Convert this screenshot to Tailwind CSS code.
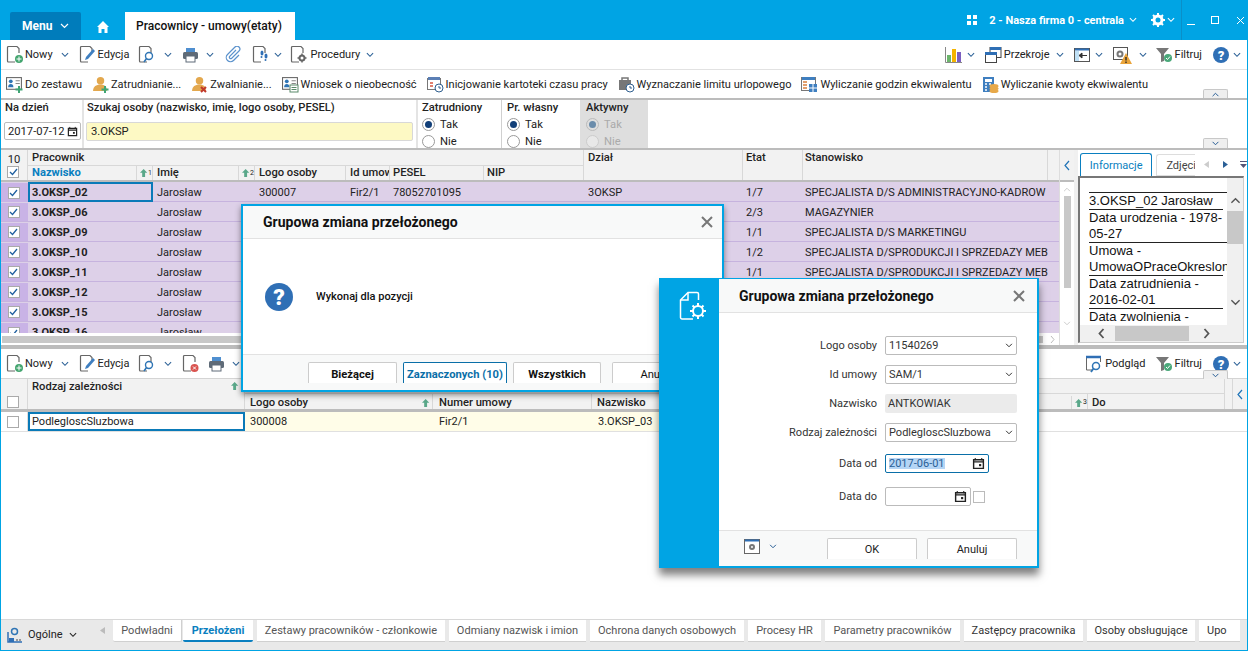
<!DOCTYPE html>
<html lang="pl">
<head>
    <meta charset="UTF-8">
    <title>Pracownicy - umowy(etaty)</title>
    <script src="https://cdn.jsdelivr.net/npm/@tailwindcss/browser@4"></script>
</head>
<body class="w-[1248px] h-[651px] overflow-hidden relative bg-white text-[#222] text-[11px] leading-none font-[family-name:Roboto,sans-serif]">
    <!-- shared icons -->
    <svg class="hidden">
        <symbol id="chev" viewBox="0 0 9 6"><path d="M1 1l3.500 3.500L8 1" fill="none" stroke="currentColor" stroke-width="1.200"/></symbol>
        <symbol id="doc" viewBox="0 0 18 19"><path d="M9 17H2.500a1 1 0 0 1-1-1V2.500a1 1 0 0 1 1-1H11l2 2V8" fill="none" stroke="#666" stroke-width="1.200"/></symbol>
        <symbol id="cal" viewBox="0 0 12 12"><path d="M1.500 2.500h9v8h-9zM1.500 4.500h9" fill="none" stroke="#222" stroke-width="1.300"/><path d="M3 1v2M9 1v2" stroke="#222"/><rect x="6.500" y="6.500" width="2" height="2" fill="#222"/></symbol>
        <symbol id="sort" viewBox="0 0 11 11"><path d="M5 0L0 5h3v6h4V5h3z" fill="#5aa88a"/></symbol>
        <symbol id="help" viewBox="0 0 16 16"><circle cx="8" cy="8" r="8" fill="#2f6fb5"/><text x="8" y="12.500" text-anchor="middle" font-family="Roboto" font-weight="900" font-size="13" fill="#fff">?</text></symbol>
        <symbol id="print" viewBox="0 0 17 16"><rect x="4" y="1" width="9" height="5" fill="#4f8fd0"/><rect x="1" y="5" width="15" height="7" rx="1.500" fill="#5f6b78"/><rect x="4" y="9" width="9" height="6" fill="#fff" stroke="#5f6b78"/></symbol>
        <symbol id="filter" viewBox="0 0 17 16"><path d="M0 1h13L8 7v7l-3 1V7z" fill="#777"/><circle cx="12" cy="11" r="4" fill="#4aa87a"/><path d="M10 11l1.500 1.500L14 9.500" fill="none" stroke="#fff"/></symbol>
        <symbol id="newdoc" viewBox="0 0 18 19"><use href="#doc"/><circle cx="13" cy="14" r="4" fill="#43a56f"/><path d="M13 11.500v5M10.500 14h5" stroke="#fff"/></symbol>
        <symbol id="edit" viewBox="0 0 18 19"><use href="#doc"/><path d="M6 15l1-3 7-8 2 2-7 8z" fill="#3f7fc0"/></symbol>
        <symbol id="find" viewBox="0 0 18 19"><use href="#doc"/><circle cx="11" cy="11" r="3.500" fill="#fff" stroke="#2f75b5" stroke-width="1.400"/><path d="M8.500 13.500L6 17" stroke="#2f75b5" stroke-width="1.600"/></symbol>
        <symbol id="person" viewBox="0 0 16 16"><circle cx="8" cy="4.500" r="3.500" fill="#e3a84e"/><path d="M1 14c0-4 3-6 7-6s6 2 6 6z" fill="#e3a84e"/></symbol>
        <symbol id="card" viewBox="0 0 16 16"><rect x=".5" y="1.500" width="14" height="11" fill="#fff" stroke="#666"/><circle cx="4.500" cy="5" r="1.800" fill="#2f75b5"/><path d="M2 10.500c0-2 1-3 2.500-3s2.500 1 2.500 3z" fill="#2f75b5"/><path d="M9 4.500h4M9 7h4" stroke="#888"/></symbol>
    </svg>

    <div class="h-full flex flex-col border-x border-b border-[#00a4e4]">
        <!-- title bar -->
        <div class="h-[40px] -mx-px bg-[#00a4e4] flex items-end shrink-0 text-white">
            <div class="ml-[10px] w-[71px] h-[28px] bg-[#007cbb] rounded-t-[2px] flex items-center pl-[12px] font-bold text-[12px]">Menu<svg class="w-[9px] h-[6px] ml-[8px]"><use href="#chev"/></svg></div>
            <svg class="ml-[16px] mb-[7px] w-[12px] h-[12px]" viewBox="0 0 12 12"><path d="M6 0L0 6h1.500v6h3V8h3v4h3V6H12z" fill="#fff"/></svg>
            <div class="ml-[16px] w-[170px] h-[28px] bg-white text-[#111] flex items-center pl-[11px] font-medium text-[12px]">Pracownicy - umowy(etaty)</div>
            <div class="ml-auto h-[40px] flex items-center font-bold">
                <div class="grid grid-cols-2 gap-[2px] w-[10px]"><i class="h-[4px] bg-white"></i><i class="h-[4px] bg-white"></i><i class="h-[4px] bg-white"></i><i class="h-[4px] bg-white"></i></div>
                <span class="ml-[12px]">2 - Nasza firma 0 - centrala</span>
                <svg class="w-[8px] h-[6px] ml-[5px]"><use href="#chev"/></svg>
                <svg class="ml-[14px] w-[14px] h-[14px]" viewBox="0 0 14 14"><circle cx="7" cy="7" r="4" fill="none" stroke="#fff" stroke-width="3"/><path d="M7 0v3M7 11v3M0 7h3M11 7h3M2 2l2 2M10 10l2 2M2 12l2-2M10 4l2-2" stroke="#fff" stroke-width="2"/></svg>
                <svg class="w-[8px] h-[6px] ml-[2px]"><use href="#chev"/></svg>
                <div class="ml-[6px] h-[40px] border-l border-[#0a8fc8] flex items-center pl-[5px] pr-[3px]">
                    <i class="block w-[8px] h-[1px] bg-white mt-[8px]"></i>
                    <i class="block ml-[16px] w-[8px] h-[8px] border border-white"></i>
                    <svg class="ml-[17px] w-[9px] h-[9px]" viewBox="0 0 9 9"><path d="M1 1l7 7M8 1L1 8" stroke="#fff"/></svg>
                </div>
            </div>
        </div>

        <!-- main toolbar -->
        <div class="h-[30px] shrink-0 border-b border-[#e2e2e2] flex items-center">
            <svg class="ml-[5px] w-[18px] h-[19px]"><use href="#newdoc"/></svg><span class="ml-[1px]">Nowy</span>
            <svg class="ml-[8px] w-[8px] h-[6px] text-[#2a5f96]"><use href="#chev"/></svg>
            <svg class="ml-[10px] w-[18px] h-[19px]"><use href="#edit"/></svg><span class="ml-[1px]">Edycja</span>
            <svg class="ml-[9px] w-[18px] h-[19px]"><use href="#find"/></svg>
            <svg class="ml-[8px] w-[8px] h-[6px] text-[#2a5f96]"><use href="#chev"/></svg>
            <svg class="ml-[10px] w-[17px] h-[16px]"><use href="#print"/></svg>
            <svg class="ml-[7px] w-[8px] h-[6px] text-[#2a5f96]"><use href="#chev"/></svg>
            <svg class="ml-[11px] w-[17px] h-[17px]" viewBox="0 0 17 17"><path d="M11 4l-6.500 6.500a1.500 1.500 0 0 0 2 2L14 5a2.800 2.800 0 0 0-4-4L2.500 8.500a4.200 4.200 0 0 0 6 6L14 9" fill="none" stroke="#5b92cc" stroke-width="1.200"/></svg>
            <svg class="ml-[10px] w-[18px] h-[19px]" viewBox="0 0 18 19"><use href="#doc"/><ellipse cx="10" cy="8" rx="1.500" ry="2.500" fill="#2f6fb5"/><ellipse cx="14" cy="11" rx="1.500" ry="2.500" fill="#2f6fb5"/><circle cx="9.500" cy="12" r="1" fill="#2f6fb5"/><circle cx="13.500" cy="15" r="1" fill="#2f6fb5"/></svg>
            <svg class="ml-[4px] w-[8px] h-[6px] text-[#2a5f96]"><use href="#chev"/></svg>
            <svg class="ml-[8px] w-[18px] h-[19px]" viewBox="0 0 18 19"><use href="#doc"/><circle cx="12" cy="13" r="2.500" fill="none" stroke="#666" stroke-width="2"/><path d="M12 8.500v2M12 15.500v2M7.500 13h2M14.500 13h2" stroke="#666" stroke-width="1.500"/></svg>
            <span class="ml-[2px]">Procedury</span>
            <svg class="ml-[6px] w-[8px] h-[6px] text-[#2a5f96]"><use href="#chev"/></svg>

            <div class="ml-auto flex items-center pr-[6px]">
                <svg class="w-[17px] h-[16px]" viewBox="0 0 17 16"><path d="M.5 0v15.500H17" fill="none" stroke="#888"/><rect x="2" y="8" width="4" height="7" fill="#6cb56c"/><rect x="7" y="2" width="4" height="13" fill="#f5b400"/><rect x="12" y="5" width="4" height="10" fill="#7b5fc0"/></svg>
                <svg class="ml-[5px] w-[8px] h-[6px] text-[#2a5f96]"><use href="#chev"/></svg>
                <svg class="ml-[10px] w-[17px] h-[16px]" viewBox="0 0 17 16"><rect x="5" y=".5" width="11" height="10" fill="#fff" stroke="#444"/><rect x="5" y="0" width="11" height="3" fill="#2f6fb5"/><rect x=".5" y="5.500" width="11" height="10" fill="#fff" stroke="#444"/><rect x="0" y="5" width="12" height="3" fill="#2f6fb5"/></svg>
                <span class="ml-[2px]">Przekroje</span>
                <svg class="ml-[6px] w-[8px] h-[6px] text-[#2a5f96]"><use href="#chev"/></svg>
                <svg class="ml-[10px] w-[16px] h-[14px]" viewBox="0 0 16 14"><rect x=".5" y=".5" width="15" height="13" fill="#fff" stroke="#555"/><rect x="1" y="3" width="4" height="10" fill="#bfe0f5"/><path d="M5 7.500h8M5 7.500l3-2.500v5z" stroke="#333" fill="#333"/><path d="M1 1.500h14" stroke="#2f6fb5" stroke-width="2"/></svg>
                <svg class="ml-[5px] w-[8px] h-[6px] text-[#2a5f96]"><use href="#chev"/></svg>
                <svg class="ml-[10px] w-[20px] h-[18px]" viewBox="0 0 20 18"><rect x=".5" y="1.500" width="14" height="12" fill="#fff" stroke="#555"/><circle cx="7" cy="8" r="2.500" fill="none" stroke="#777" stroke-width="2"/><path d="M13 7l6 11H7z" fill="#eaa43a"/><path d="M13 11v3.500M13 15.500v1.500" stroke="#222" stroke-width="1.300"/></svg>
                <svg class="ml-[6px] w-[8px] h-[6px] text-[#2a5f96]"><use href="#chev"/></svg>
                <svg class="ml-[9px] w-[17px] h-[16px]"><use href="#filter"/></svg>
                <span class="ml-[2px]">Filtruj</span>
                <svg class="ml-[11px] w-[16px] h-[16px]"><use href="#help"/></svg>
                <svg class="ml-[4px] w-[8px] h-[6px] text-[#2a5f96]"><use href="#chev"/></svg>
            </div>
        </div>

        <!-- actions toolbar -->
        <div class="h-[28px] shrink-0 flex items-center relative">
            <svg class="ml-[5px] w-[17px] h-[17px]" viewBox="0 0 17 17"><use href="#card"/><path d="M13 10v7M9.500 13.500h7" stroke="#3fa574" stroke-width="2"/></svg><span class="ml-[2px]">Do zestawu</span>
            <svg class="ml-[10px] w-[17px] h-[17px]" viewBox="0 0 17 17"><use href="#person"/><path d="M13 10v7M9.500 13.500h7" stroke="#3fa574" stroke-width="2"/></svg><span class="ml-[2px]">Zatrudnianie...</span>
            <svg class="ml-[10px] w-[17px] h-[17px]" viewBox="0 0 17 17"><use href="#person"/><path d="M10 11l5 5M15 11l-5 5" stroke="#c0392b" stroke-width="2"/></svg><span class="ml-[2px]">Zwalnianie...</span>
            <svg class="ml-[10px] w-[17px] h-[17px]" viewBox="0 0 17 17"><use href="#card"/><rect x="8" y="9" width="8" height="7" fill="#fff" stroke="#5a8a6a"/><path d="M9.500 11.500h5M9.500 13.500h5" stroke="#5a8a6a"/></svg><span class="ml-[2px]">Wniosek o nieobecność</span>
            <svg class="ml-[10px] w-[17px] h-[17px]" viewBox="0 0 17 17"><rect x=".5" y="2.500" width="13" height="11" fill="#fff" stroke="#777"/><rect x="1" y="1" width="12" height="3" fill="#5b7fb5"/><path d="M3 7h3M3 10h3" stroke="#d9573f" stroke-width="1.500"/><circle cx="12" cy="12" r="4" fill="#fff" stroke="#2f5f8f"/><path d="M12 10v2h2" fill="none" stroke="#2f5f8f"/></svg><span class="ml-[2px]">Inicjowanie kartoteki czasu pracy</span>
            <svg class="ml-[10px] w-[17px] h-[17px]" viewBox="0 0 17 17"><rect x="1" y="4" width="12" height="10" fill="#777"/><path d="M4 4V2h6v2" fill="none" stroke="#777" stroke-width="1.500"/><circle cx="12" cy="12" r="4" fill="#fff" stroke="#2f5f8f"/><path d="M12 10v2h2" fill="none" stroke="#2f5f8f"/></svg><span class="ml-[2px]">Wyznaczanie limitu urlopowego</span>
            <svg class="ml-[10px] w-[17px] h-[17px]" viewBox="0 0 17 17"><rect x=".5" y="1.500" width="14" height="13" fill="#fff" stroke="#777"/><rect x="1" y="1" width="13" height="3" fill="#3f7fc0"/><path d="M2 6h4M2 9h4M2 12h4" stroke="#d9803f" stroke-width="1.500"/><rect x="8" y="8" width="8" height="8" fill="#3f7fc0"/><path d="M12 8v8M8 12h8" stroke="#fff"/></svg><span class="ml-[2px]">Wyliczanie godzin ekwiwalentu</span>
            <svg class="ml-[10px] w-[17px] h-[17px]" viewBox="0 0 17 17"><rect x="1" y="1" width="11" height="15" fill="#3f7fc0"/><rect x="3" y="3" width="7" height="3" fill="#fff"/><path d="M3 8h2M7 8h2M3 11h2M3 14h2" stroke="#fff" stroke-width="1.500"/><ellipse cx="12" cy="10" rx="4.500" ry="2" fill="#e7a94a"/><ellipse cx="12" cy="12.500" rx="4.500" ry="2" fill="#e7a94a"/><ellipse cx="12" cy="15" rx="4.500" ry="2" fill="#e7a94a"/></svg><span class="ml-[2px]">Wyliczanie kwoty ekwiwalentu</span>
            <div class="absolute left-[1202px] top-[19px] w-[25px] h-[9px] bg-[#efefef] border border-b-0 border-[#c8c8c8] rounded-t-[2px] flex justify-center items-center"><svg class="w-[9px] h-[5px] text-[#2a5f96] rotate-180"><use href="#chev"/></svg></div>
        </div>

        <!-- filter row -->
        <div class="h-[52px] shrink-0 border-y-[2px] border-[#bcbcbc] flex font-medium relative text-[11.200px]">
            <div class="w-[83px] pl-[4px] pt-[2px] border-r-[2px] border-[#e4e4e4]">
                <div>Na dzień</div>
                <div class="mt-[9px] w-[77px] h-[18px] -ml-px border border-[#bbb] rounded-[2px] flex items-center pl-[3px] font-normal">2017-07-12<svg class="ml-auto mr-[2px] w-[11px] h-[11px]"><use href="#cal"/></svg></div>
            </div>
            <div class="w-[334px] pl-[3px] pt-[2px] border-r-[2px] border-[#e4e4e4]">
                <div>Szukaj osoby (nazwisko, imię, logo osoby, PESEL)</div>
                <div class="mt-[9px] w-[327px] h-[19px] -ml-[1px] bg-[#fdf9c4] border border-[#d8d8d8] rounded-[2px] flex items-center pl-[4px] font-normal">3.OKSP</div>
            </div>
            <div class="w-[84px] pl-[4px] pt-[2px] border-r-[1px] border-[#d0d0d0]">
                <div>Zatrudniony</div>
                <div class="mt-[5px] flex items-center font-normal"><span class="w-[13px] h-[13px] rounded-full border border-[#999] flex items-center justify-center"><i class="block w-[7px] h-[7px] rounded-full bg-[#123f78]"></i></span><span class="ml-[5px]">Tak</span></div>
                <div class="mt-[4px] flex items-center font-normal"><span class="w-[13px] h-[13px] rounded-full border border-[#999]"></span><span class="ml-[5px]">Nie</span></div>
            </div>
            <div class="w-[78px] pl-[5px] pt-[2px]">
                <div>Pr. własny</div>
                <div class="mt-[5px] flex items-center font-normal"><span class="w-[13px] h-[13px] rounded-full border border-[#999] flex items-center justify-center"><i class="block w-[7px] h-[7px] rounded-full bg-[#123f78]"></i></span><span class="ml-[5px]">Tak</span></div>
                <div class="mt-[4px] flex items-center font-normal"><span class="w-[13px] h-[13px] rounded-full border border-[#999]"></span><span class="ml-[5px]">Nie</span></div>
            </div>
            <div class="w-[68px] pl-[6px] pt-[2px] bg-[#dedede]">
                <div>Aktywny</div>
                <div class="mt-[5px] flex items-center font-normal text-[#aaa]"><span class="w-[13px] h-[13px] rounded-full border border-[#bbb] flex items-center justify-center"><i class="block w-[7px] h-[7px] rounded-full bg-[#6a8cab]"></i></span><span class="ml-[5px]">Tak</span></div>
                <div class="mt-[4px] flex items-center font-normal text-[#aaa]"><span class="w-[13px] h-[13px] rounded-full border border-[#ccc] bg-[#e8e8e8]"></span><span class="ml-[5px]">Nie</span></div>
            </div>
            <div class="absolute left-[1202px] top-[38px] w-[25px] h-[10px] bg-[#efefef] border border-b-0 border-[#c8c8c8] rounded-t-[2px] flex justify-center items-center"><svg class="w-[9px] h-[5px] text-[#2a5f96]"><use href="#chev"/></svg></div>
        </div>

        <!-- upper grid + info panel -->
        <div class="h-[195px] shrink-0 flex">
            <div class="w-[1058px] flex flex-col">
                <div class="h-[32px] shrink-0 bg-[#f2f2f2] border-b-[2px] border-[#bcbcbc] grid grid-cols-[27px_125px_102px_91px_44px_94px_100px_159px_60px_245px_11px] grid-rows-[16px_14px] font-medium text-[11.200px]">
                    <div class="border-r border-[#d8d8d8] flex items-center justify-center font-normal pt-[3px]">10</div>
                    <div class="col-span-6 border-r border-[#d8d8d8] border-b pl-[4px] pt-[2px]">Pracownik</div>
                    <div class="row-span-2 border-r border-[#d8d8d8] pl-[4px] pt-[2px]">Dział</div>
                    <div class="row-span-2 border-r border-[#d8d8d8] pl-[3px] pt-[2px]">Etat</div>
                    <div class="row-span-2 border-r border-[#d8d8d8] pl-[2px] pt-[2px]">Stanowisko</div>
                    <div class="row-span-2"></div>
                    <div class="border-r border-[#d8d8d8] flex justify-center pr-[2px]"><span class="w-[12px] h-[12px] border border-[#aaa] bg-white flex items-center justify-center text-[#1f5f9f]"><svg class="w-[9px] h-[8px]" viewBox="0 0 9 8"><path d="M1 4l2.500 2.500L8 1" fill="none" stroke="currentColor" stroke-width="1.300"/></svg></span></div>
                    <div class="border-r border-[#d8d8d8] pl-[4px] text-[#0a7fc0] font-bold flex items-center">Nazwisko<span class="ml-auto w-[16px] h-full border-l border-[#d8d8d8] flex items-center pl-[3px] text-[#333] font-normal text-[7px]"><svg class="w-[8px] h-[10px]"><use href="#sort"/></svg>1</span></div>
                    <div class="border-r border-[#d8d8d8] pl-[4px] flex items-center">Imię<span class="ml-auto w-[16px] h-full border-l border-[#d8d8d8] flex items-center pl-[3px] font-normal text-[7px]"><svg class="w-[8px] h-[10px]"><use href="#sort"/></svg>2</span></div>
                    <div class="border-r border-[#d8d8d8] pl-[4px] flex items-center">Logo osoby</div>
                    <div class="border-r border-[#d8d8d8] pl-[4px] flex items-center overflow-hidden whitespace-nowrap">Id umow</div>
                    <div class="border-r border-[#d8d8d8] pl-[3px] flex items-center">PESEL</div>
                    <div class="border-r border-[#d8d8d8] pl-[3px] flex items-center">NIP</div>
                </div>
                <div class="h-[151px] overflow-hidden bg-[#ddd0e8]">
                    <div class="h-[20px] pt-px border-b border-[#c6b3de] grid grid-cols-[27px_125px_102px_91px_44px_94px_100px_159px_60px_245px] items-center">
                        <div class="h-full bg-[#c9b3e6] flex items-center justify-center pr-[2px]"><span class="w-[12px] h-[12px] border border-[#aaa] bg-white flex items-center justify-center text-[#1f5f9f]"><svg class="w-[9px] h-[8px]" viewBox="0 0 9 8"><path d="M1 4l2.500 2.500L8 1" fill="none" stroke="currentColor" stroke-width="1.300"/></svg></span></div>
                        <div class="h-[20px] -mt-px border-2 border-[#0a7ab8] flex items-center pl-[2px] pt-px font-bold">3.OKSP_02</div>
                        <div class="pl-[4px]">Jarosław</div><div class="pl-[4px]">300007</div><div class="pl-[4px]">Fir2/1</div><div class="pl-[3px]">78052701095</div><div></div><div class="pl-[4px]">3OKSP</div><div class="pl-[3px]">1/7</div><div class="pl-[2px] whitespace-nowrap">SPECJALISTA D/S ADMINISTRACYJNO-KADROW</div>
                    </div>
                    <div class="h-[20px] pt-px border-b border-[#c6b3de] grid grid-cols-[27px_125px_102px_91px_44px_94px_100px_159px_60px_245px] items-center">
                        <div class="h-full bg-[#c9b3e6] flex items-center justify-center pr-[2px]"><span class="w-[12px] h-[12px] border border-[#aaa] bg-white flex items-center justify-center text-[#1f5f9f]"><svg class="w-[9px] h-[8px]" viewBox="0 0 9 8"><path d="M1 4l2.500 2.500L8 1" fill="none" stroke="currentColor" stroke-width="1.300"/></svg></span></div>
                        <div class="pl-[4px] font-bold">3.OKSP_06</div>
                        <div class="pl-[4px]">Jarosław</div><div></div><div></div><div></div><div></div><div></div><div class="pl-[3px]">2/3</div><div class="pl-[2px]">MAGAZYNIER</div>
                    </div>
                    <div class="h-[20px] pt-px border-b border-[#c6b3de] grid grid-cols-[27px_125px_102px_91px_44px_94px_100px_159px_60px_245px] items-center">
                        <div class="h-full bg-[#c9b3e6] flex items-center justify-center pr-[2px]"><span class="w-[12px] h-[12px] border border-[#aaa] bg-white flex items-center justify-center text-[#1f5f9f]"><svg class="w-[9px] h-[8px]" viewBox="0 0 9 8"><path d="M1 4l2.500 2.500L8 1" fill="none" stroke="currentColor" stroke-width="1.300"/></svg></span></div>
                        <div class="pl-[4px] font-bold">3.OKSP_09</div>
                        <div class="pl-[4px]">Jarosław</div><div></div><div></div><div></div><div></div><div></div><div class="pl-[3px]">1/1</div><div class="pl-[2px]">SPECJALISTA D/S MARKETINGU</div>
                    </div>
                    <div class="h-[20px] pt-px border-b border-[#c6b3de] grid grid-cols-[27px_125px_102px_91px_44px_94px_100px_159px_60px_245px] items-center">
                        <div class="h-full bg-[#c9b3e6] flex items-center justify-center pr-[2px]"><span class="w-[12px] h-[12px] border border-[#aaa] bg-white flex items-center justify-center text-[#1f5f9f]"><svg class="w-[9px] h-[8px]" viewBox="0 0 9 8"><path d="M1 4l2.500 2.500L8 1" fill="none" stroke="currentColor" stroke-width="1.300"/></svg></span></div>
                        <div class="pl-[4px] font-bold">3.OKSP_10</div>
                        <div class="pl-[4px]">Jarosław</div><div></div><div></div><div></div><div></div><div></div><div class="pl-[3px]">1/2</div><div class="pl-[2px] whitespace-nowrap overflow-hidden">SPECJALISTA D/SPRODUKCJI I SPRZEDAŻY MEB</div>
                    </div>
                    <div class="h-[20px] pt-px border-b border-[#c6b3de] grid grid-cols-[27px_125px_102px_91px_44px_94px_100px_159px_60px_245px] items-center">
                        <div class="h-full bg-[#c9b3e6] flex items-center justify-center pr-[2px]"><span class="w-[12px] h-[12px] border border-[#aaa] bg-white flex items-center justify-center text-[#1f5f9f]"><svg class="w-[9px] h-[8px]" viewBox="0 0 9 8"><path d="M1 4l2.500 2.500L8 1" fill="none" stroke="currentColor" stroke-width="1.300"/></svg></span></div>
                        <div class="pl-[4px] font-bold">3.OKSP_11</div>
                        <div class="pl-[4px]">Jarosław</div><div></div><div></div><div></div><div></div><div></div><div class="pl-[3px]">1/1</div><div class="pl-[2px] whitespace-nowrap overflow-hidden">SPECJALISTA D/SPRODUKCJI I SPRZEDAŻY MEB</div>
                    </div>
                    <div class="h-[20px] pt-px border-b border-[#c6b3de] grid grid-cols-[27px_125px_102px_91px_44px_94px_100px_159px_60px_245px] items-center">
                        <div class="h-full bg-[#c9b3e6] flex items-center justify-center pr-[2px]"><span class="w-[12px] h-[12px] border border-[#aaa] bg-white flex items-center justify-center text-[#1f5f9f]"><svg class="w-[9px] h-[8px]" viewBox="0 0 9 8"><path d="M1 4l2.500 2.500L8 1" fill="none" stroke="currentColor" stroke-width="1.300"/></svg></span></div>
                        <div class="pl-[4px] font-bold">3.OKSP_12</div>
                        <div class="pl-[4px]">Jarosław</div>
                    </div>
                    <div class="h-[20px] pt-px border-b border-[#c6b3de] grid grid-cols-[27px_125px_102px_91px_44px_94px_100px_159px_60px_245px] items-center">
                        <div class="h-full bg-[#c9b3e6] flex items-center justify-center pr-[2px]"><span class="w-[12px] h-[12px] border border-[#aaa] bg-white flex items-center justify-center text-[#1f5f9f]"><svg class="w-[9px] h-[8px]" viewBox="0 0 9 8"><path d="M1 4l2.500 2.500L8 1" fill="none" stroke="currentColor" stroke-width="1.300"/></svg></span></div>
                        <div class="pl-[4px] font-bold">3.OKSP_15</div>
                        <div class="pl-[4px]">Jarosław</div>
                    </div>
                    <div class="h-[20px] pt-px grid grid-cols-[27px_125px_102px_91px_44px_94px_100px_159px_60px_245px] items-center">
                        <div class="h-full bg-[#c9b3e6] flex items-center justify-center pr-[2px]"><span class="w-[12px] h-[12px] border border-[#aaa] bg-white flex items-center justify-center text-[#1f5f9f]"><svg class="w-[9px] h-[8px]" viewBox="0 0 9 8"><path d="M1 4l2.500 2.500L8 1" fill="none" stroke="currentColor" stroke-width="1.300"/></svg></span></div>
                        <div class="pl-[4px] font-bold">3.OKSP_16</div>
                        <div class="pl-[4px]">Jarosław</div>
                    </div>
                </div>
                <div class="h-[12px] shrink-0 flex items-center pl-[1px] bg-white">
                    <div class="w-[1041px] h-[7px] bg-[#c8c8c8]"></div>
                    <svg class="ml-[7px] w-[5px] h-[9px]" viewBox="0 0 5 9"><path d="M1 1l3 3.500L1 8" fill="none" stroke="#bbb"/></svg>
                </div>
            </div>

            <div class="w-[15px] shrink-0 flex flex-col bg-white border-l border-[#ddd]">
                <div class="h-[32px] shrink-0 bg-[#f2f2f2] border-b-[2px] border-[#bcbcbc] flex items-center justify-center"><svg class="w-[6px] h-[11px]" viewBox="0 0 6 11"><path d="M5 1L1 5.500 5 10" fill="none" stroke="#1f73b7" stroke-width="1.200"/></svg></div>
                <div class="flex-1 flex flex-col items-center pt-[5px]">
                    <svg class="w-[8px] h-[5px] rotate-180 text-[#ccc]"><use href="#chev"/></svg>
                    <div class="mt-[4px] w-[7px] h-[92px] bg-[#c8c8c8]"></div>
                    <svg class="mt-[33px] w-[8px] h-[5px] text-[#ccc]"><use href="#chev"/></svg>
                </div>
            </div>
            <div class="w-[4px] shrink-0 bg-[#f0f0f0]"></div>

            <div class="flex-1 flex flex-col min-w-0">
                <div class="h-[26px] shrink-0 flex items-end pl-[2px] relative">
                    <div class="w-[73px] h-[23px] border border-b-0 border-[#0a7fc0] rounded-t-[3px] flex items-center justify-center text-[#0a7fc0]">Informacje</div>
                    <div class="ml-[4px] w-[39px] h-[22px] border-y border-l border-[#ddd] rounded-tl-[3px] flex items-center pl-[9px] overflow-hidden whitespace-nowrap text-[#444]">Zdjęci</div>
                    <svg class="ml-[9px] mb-[8px] w-[5px] h-[7px]" viewBox="0 0 5 7"><path d="M5 0v7L0 3.500z" fill="#ccc"/></svg>
                    <svg class="ml-[14px] mb-[8px] w-[5px] h-[7px]" viewBox="0 0 5 7"><path d="M0 0v7l5-3.500z" fill="#2a5f96"/></svg>
                    <svg class="ml-[12px] mb-[8px] w-[7px] h-[7px]" viewBox="0 0 7 7"><path d="M0 0h7v1H0zM0 3h7L3.500 7z" fill="#557"/></svg>
                </div>
                <div class="h-[167px] mr-[3px] border border-l-2 border-t-2 border-[#777] border-r-[#ccc] border-b-[#ccc] flex flex-col">
                    <div class="flex-1 flex min-h-0">
                        <div class="flex-1 min-w-0 overflow-hidden pt-[14px] pl-[9px] text-[13px] leading-[16px] font-[family-name:'Liberation_Sans',sans-serif] text-[#111]">
                            <div class="border-t border-[#222] whitespace-nowrap">3.OKSP_02 Jarosław</div>
                            <div class="border-t border-[#222] w-[134px]">Data urodzenia - 1978-05-27</div>
                            <div class="border-t border-[#222] whitespace-nowrap">Umowa -<br>UmowaOPraceOkreslon</div>
                            <div class="border-t border-[#222] w-[134px]">Data zatrudnienia - 2016-02-01</div>
                            <div class="border-t border-[#222] w-[134px]">Data zwolnienia -</div>
                        </div>
                        <div class="w-[16px] shrink-0 bg-[#f0f0f0] flex flex-col items-center pt-[19px]">
                            <svg class="w-[11px] h-[7px] rotate-180 text-[#555]"><use href="#chev"/></svg>
                            <div class="mt-[7px] w-full h-[33px] bg-[#c8c8c8]"></div>
                            <svg class="mt-[55px] w-[11px] h-[7px] text-[#555]"><use href="#chev"/></svg>
                        </div>
                    </div>
                    <div class="h-[17px] shrink-0 bg-[#f0f0f0] flex items-center">
                        <svg class="ml-[18px] w-[7px] h-[11px]" viewBox="0 0 6 11"><path d="M5 1L1 5.500 5 10" fill="none" stroke="#555" stroke-width="1.800"/></svg>
                        <div class="ml-[10px] w-[74px] h-[15px] bg-[#c8c8c8]"></div>
                        <svg class="ml-[14px] w-[7px] h-[11px]" viewBox="0 0 6 11"><path d="M1 1l4 4.500L1 10" fill="none" stroke="#555" stroke-width="1.800"/></svg>
                    </div>
                </div>
            </div>
        </div>

        <div class="h-[4px] shrink-0 bg-[#bcbcbc]"></div>

        <!-- lower toolbar -->
        <div class="h-[30px] shrink-0 border-b border-[#d4d4d4] flex items-center relative">
            <svg class="ml-[5px] w-[18px] h-[19px]"><use href="#newdoc"/></svg><span class="ml-[1px]">Nowy</span>
            <svg class="ml-[8px] w-[8px] h-[6px] text-[#2a5f96]"><use href="#chev"/></svg>
            <svg class="ml-[10px] w-[18px] h-[19px]"><use href="#edit"/></svg><span class="ml-[1px]">Edycja</span>
            <svg class="ml-[9px] w-[18px] h-[19px]"><use href="#find"/></svg>
            <svg class="ml-[8px] w-[8px] h-[6px] text-[#2a5f96]"><use href="#chev"/></svg>
            <svg class="ml-[10px] w-[18px] h-[19px]" viewBox="0 0 18 19"><use href="#doc"/><circle cx="12.500" cy="14" r="4" fill="#d9534f"/><path d="M11 12.500l3 3M14 12.500l-3 3" stroke="#fff"/></svg>
            <svg class="ml-[8px] w-[17px] h-[16px]"><use href="#print"/></svg>
            <svg class="ml-[7px] w-[8px] h-[6px] text-[#2a5f96]"><use href="#chev"/></svg>
            <div class="ml-auto flex items-center pr-[6px]">
                <svg class="w-[18px] h-[18px]" viewBox="0 0 18 18"><path d="M7 15H1.500V1.500h14V7" fill="none" stroke="#666"/><path d="M1 2h15" stroke="#2f6fb5" stroke-width="2.500"/><circle cx="11" cy="11" r="3.500" fill="#fff" stroke="#2f75b5" stroke-width="1.500"/><path d="M8.500 13.500L6 17" stroke="#2f75b5" stroke-width="1.800"/></svg>
                <span class="ml-[2px]">Podgląd</span>
                <svg class="ml-[10px] w-[17px] h-[16px]"><use href="#filter"/></svg>
                <span class="ml-[2px]">Filtruj</span>
                <svg class="ml-[11px] w-[16px] h-[16px]"><use href="#help"/></svg>
                <svg class="ml-[4px] w-[8px] h-[6px] text-[#2a5f96]"><use href="#chev"/></svg>
            </div>
            <div class="absolute left-[1202px] top-[21px] w-[25px] h-[9px] bg-[#efefef] border border-b-0 border-[#c8c8c8] rounded-t-[2px] flex justify-center items-center"><svg class="w-[9px] h-[5px] text-[#2a5f96]"><use href="#chev"/></svg></div>
        </div>

        <!-- lower grid -->
        <div class="h-[33px] shrink-0 bg-[#f2f2f2] border-b-[3px] border-[#bcbcbc] grid grid-cols-[27px_217px_188px_159px_496px_136px_9px_1fr] grid-rows-[15px_15px] font-medium text-[11.200px]">
            <div class="row-span-2 border-r border-[#d8d8d8] flex items-end justify-center pb-[1px] pr-[2px]"><span class="w-[12px] h-[12px] border border-[#aaa] bg-white"></span></div>
            <div class="row-span-2 border-r border-[#d8d8d8] pl-[4px] pt-[2px] flex">Rodzaj zależności<svg class="ml-auto mr-[5px] w-[8px] h-[10px]"><use href="#sort"/></svg></div>
            <div class="col-span-4 border-b border-[#d8d8d8]"></div>
            <div class="row-span-2 border-x border-[#d8d8d8]"></div>
            <div class="row-span-2 flex items-center justify-center"><svg class="w-[6px] h-[11px]" viewBox="0 0 6 11"><path d="M5 1L1 5.500 5 10" fill="none" stroke="#1f73b7" stroke-width="1.200"/></svg></div>
            <div class="border-r border-[#d8d8d8] pl-[5px] pt-[2px] flex items-center">Logo osoby<svg class="ml-auto mr-[2px] w-[8px] h-[10px]"><use href="#sort"/></svg></div>
            <div class="border-r border-[#d8d8d8] pl-[6px] pt-[2px] flex items-center">Numer umowy</div>
            <div class="border-r border-[#d8d8d8] pl-[5px] pt-[2px] flex items-center">Nazwisko<span class="ml-auto w-[16px] h-full border-l border-[#d8d8d8] flex items-center pl-[3px] font-normal text-[7px]"><svg class="w-[8px] h-[10px]"><use href="#sort"/></svg>3</span></div>
            <div class="pl-[4px] pt-[2px] flex items-center">Do</div>
        </div>
        <div class="h-[20px] shrink-0 border-b border-[#e0e0e0] grid grid-cols-[27px_217px_188px_159px_400px] items-center">
            <div class="flex justify-center border-r border-[#ddd] h-full items-center pr-[2px]"><span class="w-[12px] h-[12px] border border-[#aaa] bg-white"></span></div>
            <div class="h-full border-2 border-[#0a7ab8] flex items-center pl-[2px]">PodlegloscSluzbowa</div>
            <div class="h-full bg-[#fffde8] flex items-center pl-[5px]">300008</div>
            <div class="h-full bg-[#fffde8] flex items-center pl-[6px]">Fir2/1</div>
            <div class="h-full bg-[#fffde8] flex items-center pl-[6px]">3.OKSP_03</div>
        </div>
        <div class="flex-1"></div>

        <!-- bottom tabs -->
        <div class="h-[31px] shrink-0 bg-[#e9e9e9] border-t border-[#d8d8d8] flex text-[#555]">
            <div class="w-[112px] shrink-0 flex">
                <svg class="ml-[6px] mt-[7px] w-[16px] h-[16px]" viewBox="0 0 16 16"><path d="M1 5v10h14" fill="none" stroke="#2f6fb5" stroke-width="1.500"/><circle cx="7.500" cy="4.500" r="3" fill="none" stroke="#2f75b5" stroke-width="1.500"/><rect x="2" y="11" width="5" height="4" fill="#2f6fb5"/><rect x="9" y="12" width="2" height="2" fill="#999"/><rect x="12" y="12" width="2" height="2" fill="#999"/></svg>
                <span class="ml-[5px] mt-[9px] text-[#222]">Ogólne</span>
                <svg class="ml-[6px] mt-[12px] w-[8px] h-[6px] text-[#222]"><use href="#chev"/></svg>
                <svg class="ml-[23px] mt-[7px] w-[5px] h-[7px]" viewBox="0 0 5 7"><path d="M5 0v7L0 3.500z" fill="#bbb"/></svg>
            </div>
            <div class="h-[22px] w-[69px] bg-white border-r border-b border-[#d0d0d0] rounded-b-[2px] flex items-center justify-center">Podwładni</div>
            <div class="ml-[1px] h-[22px] w-[70px] bg-white border-b-2 border-[#0a7fc0] rounded-b-[2px] flex items-center justify-center font-bold text-[#0a7fc0]">Przełożeni</div>
            <div class="ml-[4px] h-[22px] w-[188px] bg-white border-b border-[#d0d0d0] flex items-center justify-center">Zestawy pracowników - członkowie</div>
            <div class="ml-[4px] h-[22px] w-[137px] bg-white border-b border-[#d0d0d0] flex items-center justify-center">Odmiany nazwisk i imion</div>
            <div class="ml-[4px] h-[22px] w-[154px] bg-white border-b border-[#d0d0d0] flex items-center justify-center">Ochrona danych osobowych</div>
            <div class="ml-[4px] h-[22px] w-[73px] bg-white border-b border-[#d0d0d0] flex items-center justify-center">Procesy HR</div>
            <div class="ml-[4px] h-[22px] w-[135px] bg-white border-b border-[#d0d0d0] flex items-center justify-center">Parametry pracowników</div>
            <div class="ml-[4px] h-[22px] w-[119px] bg-white border-b border-[#d0d0d0] flex items-center justify-center text-[#333]">Zastępcy pracownika</div>
            <div class="ml-[4px] h-[22px] w-[108px] bg-white border-b border-[#d0d0d0] flex items-center justify-center text-[#333]">Osoby obsługujące</div>
            <div class="ml-[4px] h-[22px] w-[41px] bg-white border-b border-[#d0d0d0] flex items-center pl-[8px] text-[#333]">Upo</div>
        </div>
    </div>

    <!-- confirm dialog -->
    <div class="absolute left-[241px] top-[204px] w-[483px] h-[188px] bg-white border-2 border-[#00a4e4] shadow-[0_3px_6px_rgba(0,0,0,0.45)] flex flex-col overflow-hidden">
        <div class="h-[33px] shrink-0 bg-[#f8f9f9] border-b border-[#e2e2e2] flex items-center pl-[20px] pr-[9px] text-[14px] font-bold text-[#111]">
            Grupowa zmiana przełożonego
            <svg class="ml-auto w-[12px] h-[12px]" viewBox="0 0 12 12"><path d="M1 1l10 10M11 1L1 11" stroke="#777" stroke-width="2"/></svg>
        </div>
        <div class="flex-1 flex items-center pl-[22px] font-medium text-[#111]">
            <svg class="w-[28px] h-[28px]"><use href="#help"/></svg>
            <span class="ml-[23px]">Wykonaj dla pozycji</span>
        </div>
        <div class="h-[36px] shrink-0 bg-[#f8f9f9] border-t border-[#e2e2e2] flex items-start pt-[7px] pl-[65px] text-[11.200px] text-[#111]">
            <div class="w-[89px] h-[21px] bg-white border border-b-0 border-[#ccc] rounded-t-[2px] flex items-center justify-center pt-[3px] font-bold">Bieżącej</div>
            <div class="ml-[6px] w-[104px] h-[21px] bg-white border border-b-0 border-[#0a6fa8] rounded-t-[2px] flex items-center justify-center pt-[3px] font-bold text-[#0a6fa8]">Zaznaczonych (10)</div>
            <div class="ml-[6px] w-[88px] h-[21px] bg-white border border-b-0 border-[#ccc] rounded-t-[2px] flex items-center justify-center pt-[3px] font-bold">Wszystkich</div>
            <div class="ml-[11px] w-[88px] h-[21px] bg-white border border-b-0 border-[#ccc] rounded-t-[2px] flex items-center justify-center pt-[3px]">Anuluj</div>
        </div>
    </div>

    <!-- edit dialog -->
    <div class="absolute left-[659px] top-[278px] w-[380px] h-[290px] bg-[#00a4e4] border-2 border-[#00a4e4] border-t-[1px] shadow-[0_7px_8px_rgba(0,0,0,0.5)] flex">
        <div class="w-[58px] shrink-0 pt-[12px] pl-[18px]">
            <svg class="w-[28px] h-[30px]" viewBox="0 0 28 30"><path d="M14 28H3a1.500 1.500 0 0 1-1.500-1.500V9L9 1.500h9a1.500 1.500 0 0 1 1.500 1.500v6" fill="none" stroke="#fff" stroke-width="1.500"/><path d="M2 9h7V2" fill="none" stroke="#fff" stroke-width="1.500"/><circle cx="19" cy="20" r="5" fill="none" stroke="#fff" stroke-width="2"/><path d="M19 12v3M19 25v3M11 20h3M24 20h3M13.500 14.500l2 2M22.500 23.500l2 2M13.500 25.500l2-2M22.500 16.500l2-2" stroke="#fff" stroke-width="2"/></svg>
        </div>
        <div class="flex-1 bg-white flex flex-col min-w-0">
            <div class="h-[34px] shrink-0 bg-[#f8f9f9] border-b border-[#e2e2e2] flex items-center pl-[20px] pr-[12px] text-[14px] font-bold text-[#111]">
                Grupowa zmiana przełożonego
                <svg class="ml-auto w-[12px] h-[12px]" viewBox="0 0 12 12"><path d="M1 1l10 10M11 1L1 11" stroke="#777" stroke-width="2"/></svg>
            </div>
            <div class="flex-1 pt-[23px] text-[#333]">
                <div class="flex items-center h-[19px]"><div class="w-[158px] text-right">Logo osoby</div><div class="ml-[8px] w-[132px] h-[19px] border border-[#bbb] rounded-[2px] flex items-center px-[3px]">11540269<svg class="ml-auto w-[8px] h-[5px] text-[#333]"><use href="#chev"/></svg></div></div>
                <div class="mt-[10px] flex items-center h-[19px]"><div class="w-[158px] text-right">Id umowy</div><div class="ml-[8px] w-[132px] h-[19px] border border-[#bbb] rounded-[2px] flex items-center px-[3px]">SAM/1<svg class="ml-auto w-[8px] h-[5px] text-[#333]"><use href="#chev"/></svg></div></div>
                <div class="mt-[10px] flex items-center h-[19px]"><div class="w-[158px] text-right">Nazwisko</div><div class="ml-[8px] w-[132px] h-[19px] bg-[#ebebeb] rounded-[2px] flex items-center px-[3px]">ANTKOWIAK</div></div>
                <div class="mt-[10px] flex items-center h-[19px]"><div class="w-[158px] text-right">Rodzaj zależności</div><div class="ml-[8px] w-[132px] h-[19px] border border-[#bbb] rounded-[2px] flex items-center px-[3px]">PodlegloscSluzbowa<svg class="ml-auto w-[8px] h-[5px] text-[#333]"><use href="#chev"/></svg></div></div>
                <div class="mt-[12px] flex items-center h-[19px]"><div class="w-[158px] text-right">Data od</div><div class="ml-[8px] w-[104px] h-[19px] border border-[#0a6fa8] rounded-[2px] flex items-center px-[3px]"><span class="bg-[#b5d5f5] text-[#2a5f96]">2017-06-01</span><svg class="ml-auto w-[13px] h-[13px]"><use href="#cal"/></svg></div></div>
                <div class="mt-[14px] flex items-center h-[19px]"><div class="w-[158px] text-right">Data do</div><div class="ml-[8px] w-[86px] h-[19px] border border-[#bbb] rounded-[2px] flex items-center px-[3px]"><svg class="ml-auto w-[13px] h-[13px]"><use href="#cal"/></svg></div><span class="ml-[2px] w-[12px] h-[12px] border border-[#bbb]"></span></div>
            </div>
            <div class="h-[36px] shrink-0 bg-[#f8f9f9] border-t border-[#e2e2e2] flex items-start pl-[108px] relative">
                <svg class="absolute left-[25px] top-[8px] w-[16px] h-[15px]" viewBox="0 0 16 15"><rect x=".5" y=".5" width="15" height="14" fill="#fff" stroke="#666"/><path d="M1 1.500h14" stroke="#2f6fb5" stroke-width="2"/><circle cx="8" cy="8" r="2" fill="none" stroke="#777" stroke-width="2"/></svg>
                <svg class="absolute left-[50px] top-[13px] w-[8px] h-[5px] text-[#2a5f96]"><use href="#chev"/></svg>
                <div class="mt-[7px] w-[90px] h-[21px] bg-white border border-b-0 border-[#ccc] rounded-t-[2px] flex items-center justify-center text-[#222]">OK</div>
                <div class="ml-[10px] mt-[7px] w-[90px] h-[21px] bg-white border border-b-0 border-[#ccc] rounded-t-[2px] flex items-center justify-center text-[#222]">Anuluj</div>
            </div>
        </div>
    </div>
</body>
</html>
